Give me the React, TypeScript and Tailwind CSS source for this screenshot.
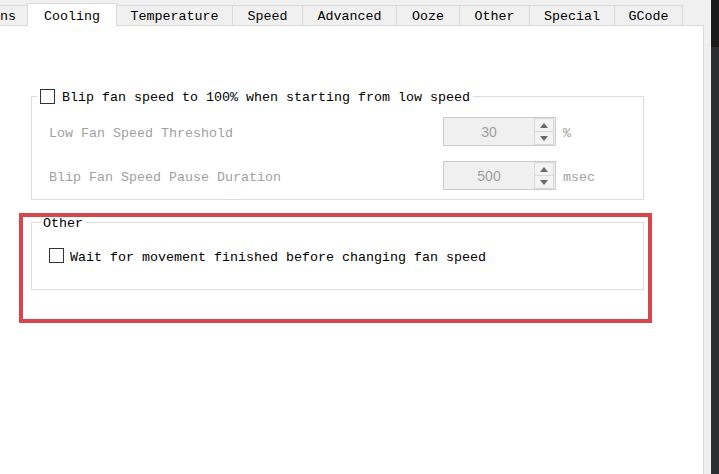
const mono = "font-['Liberation_Mono',monospace] text-[13.33px] leading-[15px]";

function Check() {
  return <span className="inline-block h-[15px] w-[15px] shrink-0 border border-[#333333] bg-white" />;
}

function Spin({ value }: { value: string }) {
  return (
    <div className="flex h-[29px] w-[113px] border border-[#cccccc] bg-[#f0f0f0]">
      <div className="flex flex-1 items-center justify-center pt-[1px] font-['Liberation_Sans',sans-serif] text-[14px] text-[#a0a0a0]">
        {value}
      </div>
      <div className="mr-[1px] flex w-[20px] flex-col">
        <div className="flex flex-1 items-center justify-center border border-[#d9d9d9] bg-[#f3f3f3]">
          <svg width="8" height="5" viewBox="0 0 8 5">
            <polygon points="0,5 4,0 8,5" fill="#6a6a6a" />
          </svg>
        </div>
        <div className="flex flex-1 items-center justify-center border border-t-0 border-[#d9d9d9] bg-[#f3f3f3]">
          <svg width="8" height="5" viewBox="0 0 8 5">
            <polygon points="0,0 8,0 4,5" fill="#6a6a6a" />
          </svg>
        </div>
      </div>
    </div>
  );
}

const tabs = [
  { label: "Temperature", cls: "w-[116px]" },
  { label: "Speed", cls: "w-[70px]" },
  { label: "Advanced", cls: "w-[94px]" },
  { label: "Ooze", cls: "w-[63px]" },
  { label: "Other", cls: "w-[70px]" },
  { label: "Special", cls: "w-[85px]" },
  { label: "GCode", cls: "w-[68px]" },
];

export default function App() {
  return (
    <div className={`flex h-[474px] w-[719px] overflow-hidden bg-[#f0f0f0] text-black ${mono}`}>
      <div className="flex w-[704px] flex-col">
        {/* Tab bar */}
        <div className="flex h-[26px] shrink-0 items-end bg-[#f0f0f0]">
          <div className="flex h-[21px] w-[27px] items-center justify-end border-t border-b border-[#d9d9d9] pr-[11px] pt-[2px]">
            <span className="whitespace-nowrap">ns</span>
          </div>
          <div className="flex h-[23px] w-[90px] items-center justify-center border-x border-t border-[#d9d9d9] bg-white pt-[2px]">
            Cooling
          </div>
          {tabs.map((t) => (
            <div
              key={t.label}
              className={`flex h-[21px] items-center justify-center border-t border-r border-b border-[#d9d9d9] bg-[#f0f0f0] pt-[2px] ${t.cls}`}
            >
              {t.label}
            </div>
          ))}
          <div className="h-[21px] flex-1 border-b border-[#d9d9d9]" />
        </div>

        {/* Panel */}
        <div className="relative flex-1 border-r border-[#d9d9d9] bg-white">
          <fieldset className="ml-[31px] mt-[63px] w-[613px] border border-[#dcdcdc]">
            <legend className="ml-[5px] flex h-[15px] items-center gap-[7px] px-[3px]">
              <Check />
              <span className="whitespace-nowrap pt-[2px]">Blip fan speed to 100% when starting from low speed</span>
            </legend>
            <div className="flex flex-col gap-[15px] pb-[9px] pl-[17px] pt-[13px]">
              <div className="flex h-[29px] items-center">
                <span className="w-[394px] pt-[3px] text-[#a0a0a0]">Low Fan Speed Threshold</span>
                <Spin value="30" />
                <span className="ml-[7px] pt-[3px] text-[#a0a0a0]">%</span>
              </div>
              <div className="flex h-[29px] items-center">
                <span className="w-[394px] pt-[3px] text-[#a0a0a0]">Blip Fan Speed Pause Duration</span>
                <Spin value="500" />
                <span className="ml-[7px] pt-[3px] text-[#a0a0a0]">msec</span>
              </div>
            </div>
          </fieldset>

          <fieldset className="ml-[31px] mt-[15px] w-[613px] border border-[#dcdcdc]">
            <legend className="ml-[9px] flex h-[15px] items-center px-[2px] pt-[2px]">Other</legend>
            <div className="pb-[26px] pl-[17px] pt-[18px]">
              <div className="flex h-[15px] items-center gap-[6px]">
                <Check />
                <span className="whitespace-nowrap pt-[3px]">Wait for movement finished before changing fan speed</span>
              </div>
            </div>
          </fieldset>

          <div className="absolute left-[19px] top-[187px] h-[110px] w-[633px] border-[4px] border-[#d8464b]" />
        </div>
      </div>
      <div className="w-[7px] bg-[#f0f0f0]" />
      <div className="flex w-[8px] flex-col">
        <div className="h-[47px] bg-[#1a1a1a]" />
        <div className="flex-1 bg-[#2b2e32]" />
      </div>
    </div>
  );
}
